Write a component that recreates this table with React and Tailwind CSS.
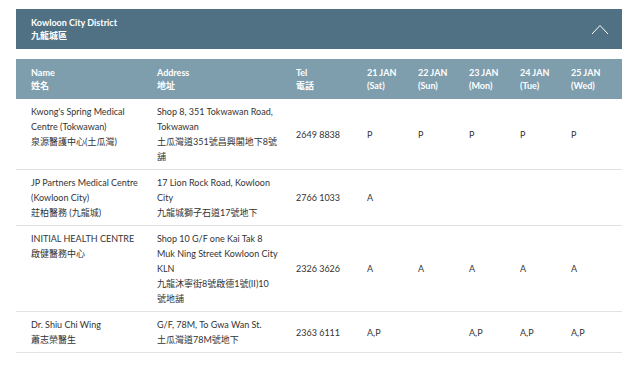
import { useState } from 'react';

const DAYS = [
  { date: '21 JAN', day: '(Sat)' },
  { date: '22 JAN', day: '(Sun)' },
  { date: '23 JAN', day: '(Mon)' },
  { date: '24 JAN', day: '(Tue)' },
  { date: '25 JAN', day: '(Wed)' },
];

const CLINICS = [
  {
    name: ["Kwong's Spring Medical", 'Centre (Tokwawan)', '泉源醫護中心(土瓜灣)'],
    address: ['Shop 8, 351 Tokwawan Road,', 'Tokwawan', '土瓜灣道351號昌興閣地下8號', '舖'],
    tel: '2649 8838',
    slots: ['P', 'P', 'P', 'P', 'P'],
  },
  {
    name: ['JP Partners Medical Centre', '(Kowloon City)', '莊柏醫務 (九龍城)'],
    address: ['17 Lion Rock Road, Kowloon', 'City', '九龍城獅子石道17號地下'],
    tel: '2766 1033',
    slots: ['A', '', '', '', ''],
  },
  {
    name: ['INITIAL HEALTH CENTRE', '啟健醫務中心'],
    address: ['Shop 10 G/F one Kai Tak 8', 'Muk Ning Street Kowloon City', 'KLN', '九龍沐寧街8號啟德1號(II)10', '號地舖'],
    tel: '2326 3626',
    slots: ['A', 'A', 'A', 'A', 'A'],
  },
  {
    name: ['Dr. Shiu Chi Wing', '蕭志榮醫生'],
    address: ['G/F, 78M, To Gwa Wan St.', '土瓜灣道78M號地下'],
    tel: '2363 6111',
    slots: ['A,P', '', 'A,P', 'A,P', 'A,P'],
  },
];

const GRID = 'grid grid-cols-[126px_139px_71px_51px_51px_51px_51px_1fr] pl-[15px]';

function Lines({ lines }) {
  return lines.map((l, i) => (
    <div key={i} className="whitespace-nowrap">{l}</div>
  ));
}

export default function App() {
  const [open, setOpen] = useState(true);

  return (
    <div
      className="w-[638px] h-[367px] bg-white pt-[9px] px-[16px] overflow-hidden"
      style={{ fontFamily: 'Lato, "Noto Sans CJK TC", sans-serif' }}
    >
      {/* ── District header ── */}
      <button
        onClick={() => setOpen(!open)}
        className="w-full h-[40px] bg-[#4f7183] flex items-center justify-between pl-[15px] pr-[13px] text-left"
      >
        <div className="text-white font-bold text-[9px] leading-[13px]">
          <div>Kowloon City District</div>
          <div>九龍城區</div>
        </div>
        <svg width="18" height="11" viewBox="0 0 18 11">
          <path d={open ? 'M1 10 L9 1.5 L17 10' : 'M1 1.5 L9 10 L17 1.5'} fill="none" stroke="#ffffff" strokeWidth="1" />
        </svg>
      </button>

      {open && (
        <div className="mt-[10px]">
          {/* ── Column headings ── */}
          <div className={`${GRID} h-[40px] bg-[#7e9eae] items-center text-white font-bold text-[9px] leading-[13px]`}>
            <div><div>Name</div><div>姓名</div></div>
            <div><div>Address</div><div>地址</div></div>
            <div><div>Tel</div><div>電話</div></div>
            {DAYS.map((d) => (
              <div key={d.date}><div>{d.date}</div><div>{d.day}</div></div>
            ))}
          </div>

          {/* ── Rows ── */}
          {CLINICS.map((c) => (
            <div
              key={c.tel}
              className={`${GRID} pt-[5px] pb-[5px] border-b border-[#e3e3e3] text-[9px] leading-[15px] text-[#333333]`}
            >
              <div><Lines lines={c.name} /></div>
              <div><Lines lines={c.address} /></div>
              <div className="self-center">{c.tel}</div>
              {c.slots.map((s, i) => (
                <div key={i} className="self-center">{s}</div>
              ))}
            </div>
          ))}
        </div>
      )}
    </div>
  );
}
